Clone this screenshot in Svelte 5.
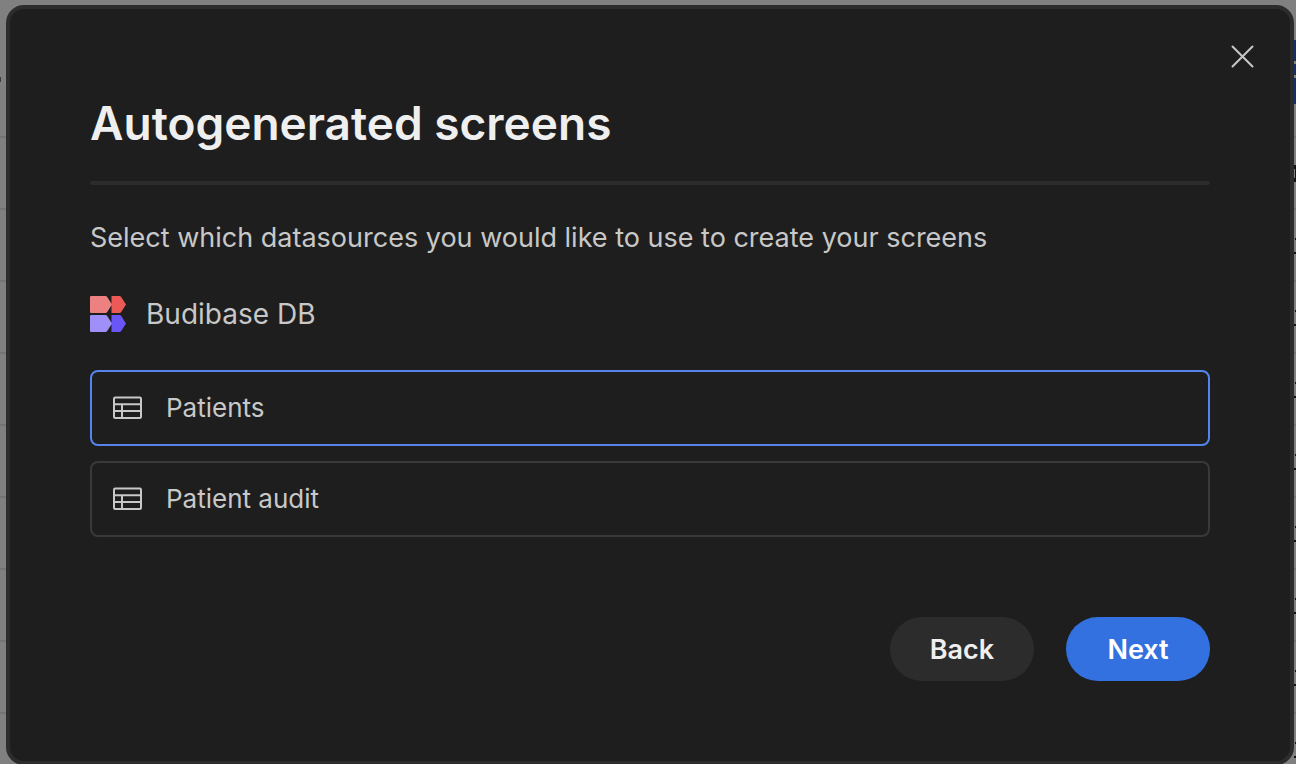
<script>
  let selected = $state(['Patients']);
  const tables = ['Patients', 'Patient audit'];
  const rows = Array.from({ length: 9 }, (_, i) => i);

  function toggle(name) {
    selected = selected.includes(name)
      ? selected.filter((n) => n !== name)
      : [...selected, name];
  }
</script>

<div class="underlay" aria-hidden="true">
  <div class="bar"><span class="dot"></span><span class="blue"></span></div>
  {#each rows as row}
    <div class="row">
      {#if row === 0}
        <span class="glyph"></span>
      {:else}
        <span class="digit"></span>
      {/if}
    </div>
  {/each}
</div>

<div class="modal" role="dialog" aria-modal="true" aria-labelledby="title">
  <button class="close" aria-label="Close">
    <svg width="24" height="24" viewBox="0 0 24 24" fill="none" stroke="currentColor" stroke-width="2" stroke-linecap="round">
      <path d="M2.500 1.500 22.500 21.500M22.500 1.500 2.500 21.500" />
    </svg>
  </button>

  <h1 id="title">Autogenerated screens</h1>
  <hr />
  <p>Select which datasources you would like to use to create your screens</p>

  <div class="source">
    <svg width="36" height="36" viewBox="0 0 36 36">
      <path fill="#eb5a56" d="M21.500 0H29.500Q30.500 0 31.200 1L36 8.500 31.200 16Q30.500 17 29.500 17H21.500Z" />
      <path fill="#6a56f6" d="M21.500 19H29.500Q30.500 19 31.200 20L36 27.500 31.200 35Q30.500 36 29.500 36H21.500Z" />
      <path fill="#ed8080" d="M1 0H15.500Q16.500 0 17.200 1L22 8.500 17.200 16Q16.500 17 15.500 17H1Q0 17 0 16V1Q0 0 1 0Z" />
      <path fill="#9f8ff8" d="M1 19H15.500Q16.500 19 17.200 20L22 27.500 17.200 35Q16.500 36 15.500 36H1Q0 36 0 35V20Q0 19 1 19Z" />
    </svg>
    <span>Budibase DB</span>
  </div>

  <div class="tables">
    {#each tables as name}
      <button
        class="table"
        class:selected={selected.includes(name)}
        aria-pressed={selected.includes(name)}
        onclick={() => toggle(name)}
      >
        <svg width="30" height="24" viewBox="0 0 30 24" fill="none" stroke="currentColor" stroke-width="2">
          <rect x="2" y="1.500" width="27" height="20.500" rx="1.200" />
          <path d="M2 8.300H29M2 15H29M10 8.300V22" />
        </svg>
        <span>{name}</span>
      </button>
    {/each}
  </div>

  <div class="actions">
    <button class="pill">Back</button>
    <button class="pill primary">Next</button>
  </div>
</div>

<style>
  :global(body) {
    background: #808080;
    font-family: Inter, sans-serif;
    overflow: hidden;
  }
  .underlay {
    position: fixed;
    inset: 0;
    overflow: hidden;
  }
  .bar,
  .row {
    box-sizing: border-box;
    display: flex;
    border-bottom: 2px solid #747474;
  }
  .bar {
    height: 138px;
    justify-content: space-between;
  }
  .row {
    height: 72px;
    justify-content: flex-end;
  }
  .dot {
    width: 1px;
    height: 5px;
    margin-top: 77px;
    background: #3c3c3c;
  }
  .blue {
    width: 4px;
    height: 64px;
    margin-top: 40px;
    background: linear-gradient(#142f66 21px, #808080 21px 24px, #142f66 24px 35px, #808080 35px 38px, #142f66 38px);
  }
  .glyph {
    box-sizing: border-box;
    width: 2px;
    height: 17px;
    margin-top: 27px;
    border: solid #141414;
    border-width: 4px 1px 4px 0;
  }
  .digit {
    width: 2px;
    height: 16px;
    margin-top: 28px;
    background:
      linear-gradient(#141414, #141414) right top / 1px 2px no-repeat,
      linear-gradient(#141414, #141414) left bottom / 2px 2px no-repeat;
  }
  .modal {
    position: relative;
    margin: 5px 2px 0 6px;
    padding: 80px;
    border: 4px solid #2c2c2c;
    border-radius: 18px;
    background: #1e1e1e;
    color: #c8c8c8;
  }
  button {
    font-family: inherit;
    cursor: pointer;
  }
  svg {
    flex: none;
    display: block;
  }
  .close {
    position: absolute;
    top: 36px;
    right: 36px;
    padding: 0;
    border: 0;
    background: none;
    color: #c8c8c8;
  }
  h1 {
    margin: 0;
    font-size: 46px;
    line-height: 68px;
    font-weight: 600;
    color: #efefef;
  }
  hr {
    height: 4px;
    margin: 24px 0 32px;
    border: 0;
    border-radius: 2px;
    background: #2c2c2c;
  }
  p {
    margin: 0;
    font-size: 27px;
    line-height: 42px;
  }
  .source {
    display: flex;
    align-items: center;
    gap: 20px;
    margin: 35px 0 36px;
    font-size: 28px;
    line-height: 40px;
  }
  .tables {
    display: grid;
    gap: 15px;
  }
  .table {
    display: flex;
    align-items: center;
    gap: 24px;
    padding: 18px 20px;
    border: 2px solid #393939;
    border-radius: 8px;
    background: none;
    color: #c8c8c8;
    font-size: 26px;
    line-height: 36px;
    text-align: left;
  }
  .table.selected {
    border-color: #5585ec;
  }
  .actions {
    display: flex;
    justify-content: flex-end;
    gap: 32px;
    margin-top: 80px;
  }
  .pill {
    min-width: 144px;
    height: 64px;
    padding: 0 32px;
    border: 0;
    border-radius: 32px;
    background: #2c2c2c;
    color: #efefef;
    font-size: 27px;
    font-weight: 600;
  }
  .primary {
    background: #3471e0;
    color: #fff;
  }
</style>
